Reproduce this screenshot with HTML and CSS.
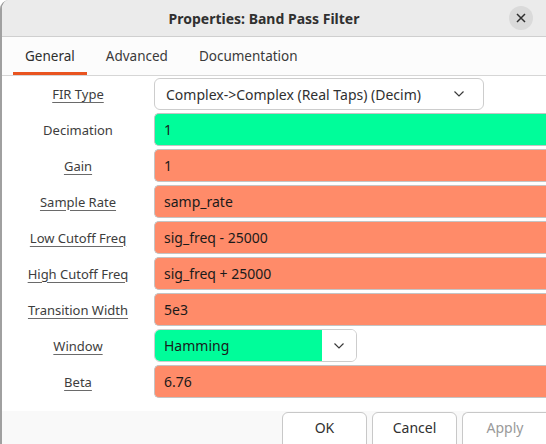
FILE: index.html
```html
<!DOCTYPE html>
<html>
<head>
<meta charset="utf-8">
<link rel="stylesheet" href="styles.css">
</head>
<body>
<div class="window">
  <div class="titlebar">
    <span></span>
    <span class="title">Properties: Band Pass Filter</span>
    <span class="close"><svg width="10" height="10" viewBox="0 0 10 10"><path d="M1 1 L9 9 M9 1 L1 9" stroke="#2e2e2e" stroke-width="1.5" fill="none"/></svg></span>
  </div>
  <div class="tabs">
    <div class="tab active">General</div>
    <div class="tab">Advanced</div>
    <div class="tab">Documentation</div>
  </div>
  <div class="form">
    <div class="label u">FIR Type</div>
    <div class="combo wide"><span>Complex-&gt;Complex (Real Taps) (Decim)</span><svg class="chev" width="12" height="8" viewBox="0 0 12 8"><path d="M1.5 1.5 L6 6 L10.5 1.5" stroke="#3a3a3a" stroke-width="1.2" fill="none"/></svg></div>

    <div class="label">Decimation</div>
    <div class="entry green">1</div>

    <div class="label u">Gain</div>
    <div class="entry orange">1</div>

    <div class="label u">Sample Rate</div>
    <div class="entry orange">samp_rate</div>

    <div class="label u">Low Cutoff Freq</div>
    <div class="entry orange">sig_freq - 25000</div>

    <div class="label u">High Cutoff Freq</div>
    <div class="entry orange">sig_freq + 25000</div>

    <div class="label u">Transition Width</div>
    <div class="entry orange">5e3</div>

    <div class="label u">Window</div>
    <div class="wcombo"><span class="wtext">Hamming</span><span class="wbtn"><svg width="12" height="8" viewBox="0 0 12 8"><path d="M1.5 1.5 L6 6 L10.5 1.5" stroke="#3a3a3a" stroke-width="1.2" fill="none"/></svg></span></div>

    <div class="label u">Beta</div>
    <div class="entry orange">6.76</div>
  </div>
  <div class="actions">
    <div class="btn">OK</div>
    <div class="btn">Cancel</div>
    <div class="btn disabled">Apply</div>
  </div>
</div>
</body>
</html>
```
FILE: styles.css
```css
html, body {
  margin: 0;
  padding: 0;
  background: #ffffff;
}
body {
  font-family: "Noto Sans", "Open Sans", sans-serif;
  color: #2e2e2e;
}
.window {
  width: 544px;
  height: 444px;
  border-left: 2px solid #a0a0a0;
  border-top-left-radius: 9px;
  overflow: hidden;
  background: #ffffff;
  display: flex;
  flex-direction: column;
}
.titlebar {
  flex-shrink: 0;
  height: 37px;
  box-sizing: border-box;
  background: #ebebeb;
  border-bottom: 1px solid #cfcfcf;
  display: grid;
  grid-template-columns: 1fr auto 1fr;
  align-items: center;
}
.title {
  font-weight: bold;
  font-size: 14px;
  color: #303030;
  margin-right: 20px;
}
.close {
  justify-self: end;
  margin-right: 13px;
  width: 24px;
  height: 24px;
  border-radius: 50%;
  background: #dadada;
  display: flex;
  align-items: center;
  justify-content: center;
}
.tabs {
  flex-shrink: 0;
  height: 39px;
  box-sizing: border-box;
  border-bottom: 1px solid #d6d6d6;
  display: flex;
  padding-left: 11px;
  background: #fcfcfc;
}
.tab {
  font-size: 13.5px;
  color: #3a3a3a;
  padding: 10px 12px 0 12px;
  margin-right: 7px;
  box-sizing: border-box;
  height: 38px;
}
.active {
  border-bottom: 3px solid #e95420;
  color: #2e2e2e;
}
.form {
  flex-shrink: 0;
  display: grid;
  grid-template-columns: 152px 1fr;
  grid-template-rows: 32px;
  grid-auto-rows: 33px;
  row-gap: 3px;
  padding-top: 2px;
}
.label {
  font-size: 13px;
  color: #3d3d3d;
  text-align: center;
  display: flex;
  align-items: center;
  justify-content: center;
}
.u {
  text-decoration: underline;
  text-underline-offset: 3px;
  text-decoration-color: #6a6a6a;
}
.entry {
  box-sizing: border-box;
  border: 1px solid #c4c4c4;
  border-right: none;
  border-radius: 5px 0 0 5px;
  padding-left: 9px;
  font-size: 14px;
  color: #1a1a1a;
  display: flex;
  align-items: center;
}
.green { background: #00fd9a; }
.orange { background: #ff8b69; }
.combo {
  box-sizing: border-box;
  width: 330px;
  height: 32px;
  border: 1px solid #cdcdcd;
  border-radius: 6px;
  background: #ffffff;
  display: flex;
  align-items: center;
  justify-content: space-between;
  padding: 0 18px 0 11px;
  font-size: 14px;
  color: #303030;
}
.wcombo {
  box-sizing: border-box;
  width: 203px;
  border: 1px solid #cdcdcd;
  border-radius: 6px;
  overflow: hidden;
  display: flex;
}
.wtext {
  flex: 1;
  background: #00fd9a;
  display: flex;
  align-items: center;
  padding-left: 9px;
  font-size: 14px;
  color: #1a1a1a;
}
.wbtn {
  width: 34px;
  background: #ffffff;
  display: flex;
  align-items: center;
  justify-content: center;
}
.actions {
  margin-top: 13px;
  flex: 1;
  min-height: 0;
  background: #f9f9f9;
  display: flex;
  justify-content: flex-end;
  gap: 5px;
  padding-top: 1px;
}
.btn {
  flex-shrink: 0;
  box-sizing: border-box;
  width: 85px;
  height: 40px;
  border: 1px solid #c8c8c8;
  border-radius: 6px;
  background: #ffffff;
  font-size: 14px;
  color: #303030;
  display: flex;
  justify-content: center;
  padding-top: 5px;
}
.btn.disabled {
  color: #9a9a9a;
  margin-right: -1px;
  border-right: none;
  border-radius: 6px 0 0 6px;
}
```
